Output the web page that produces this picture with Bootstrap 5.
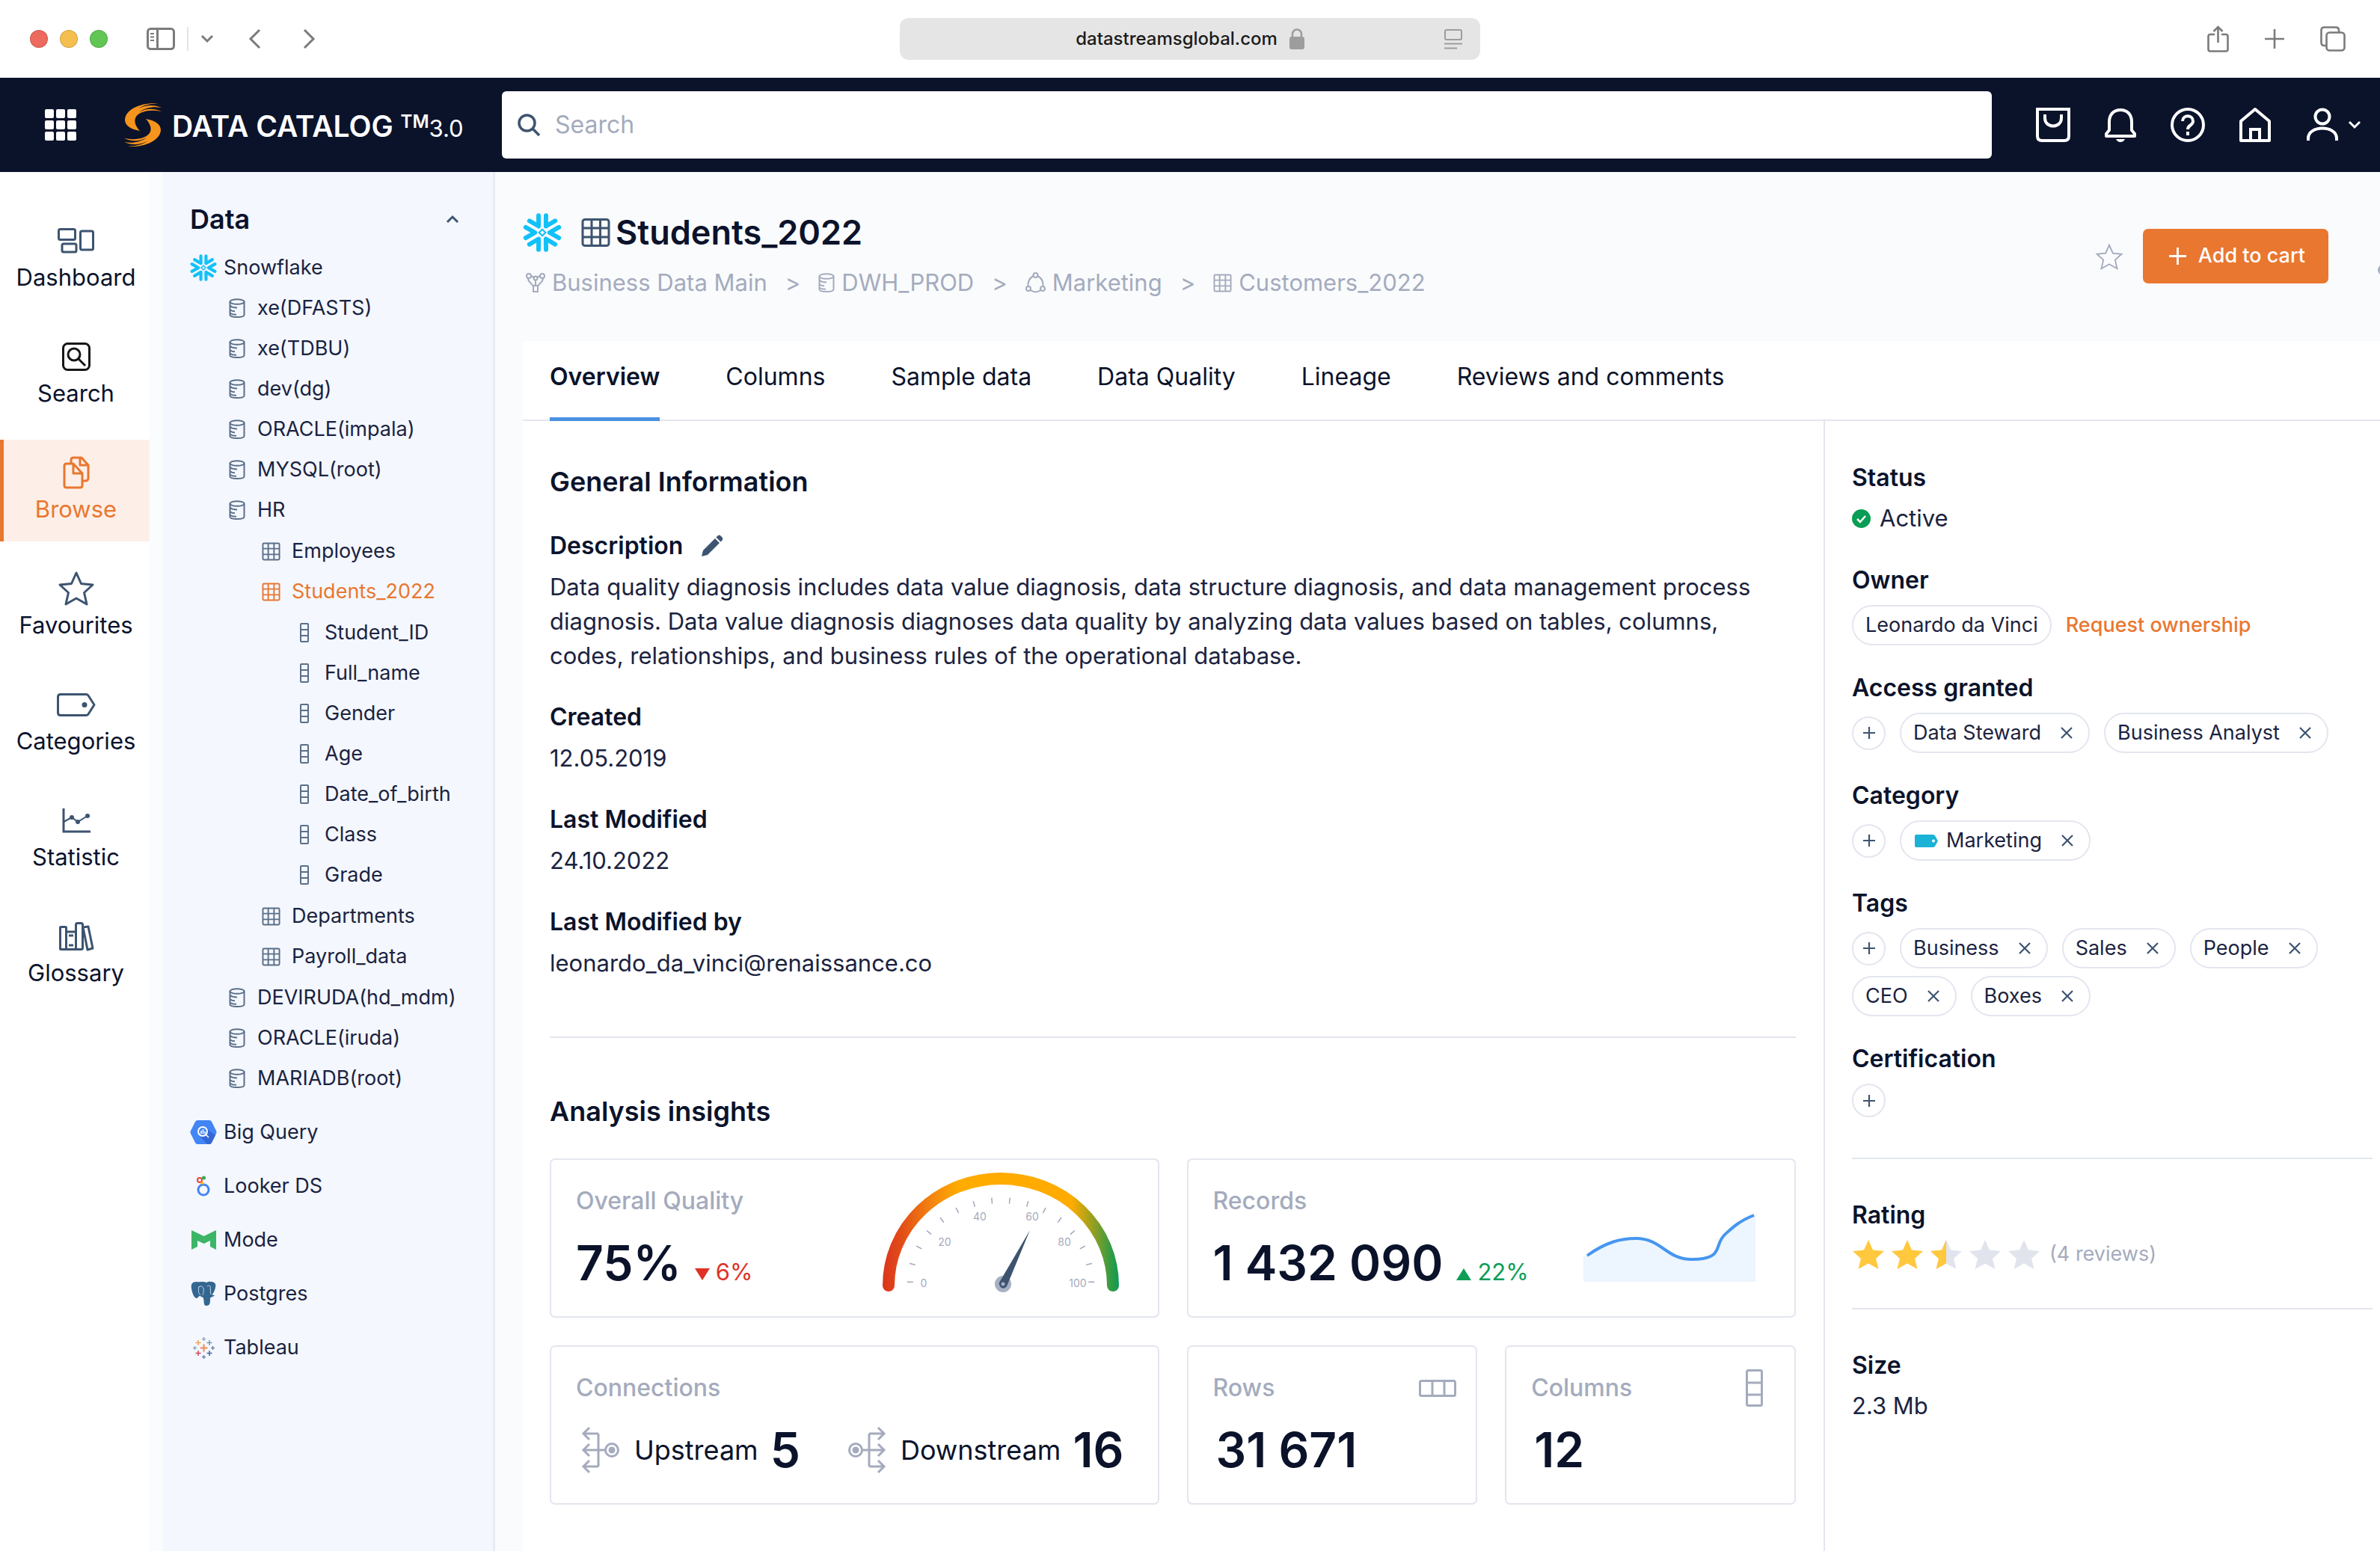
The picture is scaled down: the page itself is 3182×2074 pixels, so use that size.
<!DOCTYPE html>
<html lang="en">
<head>
<meta charset="utf-8">
<meta name="viewport" content="width=device-width, initial-scale=1">
<title>Data Catalog</title>
<link href="https://cdn.jsdelivr.net/npm/bootstrap@5.3.0/dist/css/bootstrap.min.css" rel="stylesheet">
<style>
:root{--ink:#0b132b;--text:#1b2340;--muted:#a4abbd;--line:#e3e6ef;--slate:#3d5470;--orange:#e97730;--blue:#4a90e2}
body{font-family:Inter,"Liberation Sans",sans-serif;color:var(--text);font-size:31px;line-height:46px;background:#fff}
svg{display:block;flex:none;overflow:visible}
a{color:inherit;text-decoration:none}
h1,h2,h3,p,ul,dl,dd{margin:0;padding:0}
ul{list-style:none}
.plain{background:none;border:0;padding:0;color:inherit;line-height:1}
/* browser bar */
.chrome{height:104px;color:#7b7b7b}
.side-a,.side-b{flex:1 1 50px}
.side-a{padding-left:40px}
.side-b{padding-right:46px}
.lamp{width:24px;height:24px;border-radius:50%;border:1px solid rgba(0,0,0,.15)}
.addr{width:776px;height:56px;border-radius:12px;background:#e5e5e5;color:#1b1b1b;font-size:24px;font-weight:500;padding:0 24px}
.addr-sep{width:2px;height:32px;background:#e4e4e4}
/* top bar */
.topbar{height:126px;background:var(--ink);color:#fff;padding-right:24px}
.brand-zone{width:671px;padding-left:60px}
.brand-text{margin-left:14px}
.brand-name{font-size:39px;font-weight:600}
.brand-tm{font-size:24px;font-weight:600;vertical-align:12px}
.brand-ver{font-size:31px;font-weight:400}
.find{height:90px;border-radius:6px;background:#fff;padding:0 21px}
.find input{border:0;outline:0;font-size:32px;color:var(--text);background:none}
.find input::placeholder{color:var(--muted);opacity:1}
.tools{gap:44px;margin-left:59px}
/* rail */
.rail{width:200px;padding-top:48px}
.rail a{height:136px;font-size:31px;border-left:5px solid transparent;padding:21px 2px 0 0;color:var(--ink)}
.rail ul{display:grid;row-gap:19px}
.rail .ico{height:46px;color:var(--slate)}
.rail a.on{background:#fdefe7;border-color:var(--orange);color:var(--orange)}
.rail a.on .ico{color:inherit}
.rail span{line-height:52px}
.gutter{width:18px;background:#fbfcfd}
/* tree */
.tree{width:444px;background:#f4f7fe;border-right:3px solid #e8ebf2;padding:40px 0 0 36px;font-size:27px}
.tree-title{font-size:36px;font-weight:600;color:var(--ink);padding-right:45px;margin-bottom:15px}
.tree li>a{display:flex;align-items:center;height:54px}
.tree .src>a{gap:9px}
.tree .lv1>a{padding-left:52px;gap:16px}
.tree .lv2>a{padding-left:96px;gap:15px}
.tree .lv3>a{padding-left:147px;gap:21px}
.tree ul ul ul{padding:1px 0}
.tree li svg{color:#5b6f88}
.tree a.on,.tree a.on svg{color:var(--orange)}
.tree .tall>a{height:72px}
.tall-list{padding-top:9px}
.pic{width:36px;display:flex;justify-content:center}
/* page */
.page{background:#fafbfd;min-width:0}
.head{padding:51px 0 55px 37px}
.title{font-size:45px;line-height:60px;font-weight:600;color:var(--ink)}
.crumbs{font-size:31px;color:var(--muted);margin-top:14px;gap:24px}
.crumbs a{display:flex;align-items:center;gap:9px}
.cart{height:73px;border-radius:7px;background:var(--orange);border:0;color:#fff;font-size:27px;font-weight:500;padding:0 31px 0 35px;gap:16px}
.acts{padding-top:25px;gap:27px}
.more{margin-left:38px}
.panel{margin-left:37px;background:#fff}
.tabs{border-bottom:2px solid var(--line);padding:25px 36px 0;gap:88px;font-size:32px;height:107px;color:var(--ink)}
.tabs a{line-height:46px;height:82px;border-bottom:5px solid transparent}
.tabs a.on{font-weight:600;border-color:var(--blue)}
.body-col{padding:58px 37px 60px 36px;min-width:0}
.meta-col{width:744px;border-left:2px solid var(--line);padding:53px 10px 60px 36px}
.h-sec{font-size:36px;line-height:46px;font-weight:600;color:var(--ink)}
.h-lab{font-size:32px;line-height:46px;font-weight:600;color:var(--ink);display:block}
.fact{margin-bottom:36px}
.fact .val{margin-top:9px}
.rule{height:2px;background:var(--line)}
/* insight cards */
.cards{display:grid;grid-template-columns:repeat(4,1fr);gap:37px}
.wide{grid-column:span 2}
.tile{border:2px solid var(--line);border-radius:7px;height:213px;padding:32px 0 0 33px}
.tile-slim{padding-right:26px}
.tile-head{height:46px}
.tile-lab{font-size:32px;font-weight:500;color:var(--muted)}
.big{font-size:64px;line-height:72px;font-weight:600;color:var(--ink)}
.tile-val{margin-top:24px}
.down{color:#de3226}.up{color:#0d9d57}
.delta{font-size:31px;margin-left:18px}
.delta svg{display:inline-block;vertical-align:baseline;margin-right:8px}
.flow{font-size:36px;color:var(--ink)}
.flow svg{margin-right:20px}
/* meta column */
.chips{gap:10px 19px;min-height:54px;margin:10px 0 34px}
.chip{height:54px;border:2px solid var(--line);border-radius:27px;padding:0 20px 0 16px;font-size:27px;color:var(--text)}
.chip button{margin-left:25px;color:var(--slate)}
.chip-solo{padding-right:16px}
.plus{width:45px;height:45px;border:2px solid var(--line);border-radius:50%;color:var(--slate)}
.ask{font-size:27px;font-weight:500;color:var(--orange)}
.note{font-size:27px;color:var(--muted)}
</style>
<script src="https://cdn.jsdelivr.net/npm/bootstrap@5.3.0/dist/js/bootstrap.bundle.min.js"></script>
</head>
<body class="d-flex flex-column min-vh-100">
<svg width="0" height="0" class="position-absolute" aria-hidden="true">
<defs>
<symbol id="db" viewBox="0 0 22 26"><g fill="none" stroke="currentColor" stroke-width="2"><ellipse cx="11" cy="4.5" rx="9.5" ry="3.3"/><path d="M1.5 4.5V22c0 4 19 4 19 0V4.500M2 10c2 2 5 2.500 9 2.500M2 15.500c2 1.500 4 1.800 6 1.800M2 20c3 2 5 1.800 8 1.800"/></g></symbol>
<symbol id="tb" viewBox="0 0 26 26"><path fill="none" stroke="currentColor" stroke-width="2" d="M3 1.500h20q1.500 0 1.500 1.500v20q0 1.500-1.500 1.500H3Q1.500 24.500 1.500 23V3Q1.500 1.500 3 1.500zM9 1.500v23M17 1.500v23M1.500 9h23M1.500 17h23"/></symbol>
<symbol id="cl" viewBox="0 0 12 26"><path fill="none" stroke="currentColor" stroke-width="2" d="M2 1h8q1 0 1 1v22q0 1-1 1H2q-1 0-1-1V2q0-1 1-1zM1 9h10M1 17h10"/></symbol>
<symbol id="flake" viewBox="-24 -24 48 48"><g fill="none" stroke="#12c1f8" stroke-width="5.500" stroke-linecap="round" stroke-linejoin="round"><path id="arm" d="M20.500-6.500 9 0l11.500 6.500"/><use href="#arm" transform="rotate(60)"/><use href="#arm" transform="rotate(120)"/><use href="#arm" transform="rotate(180)"/><use href="#arm" transform="rotate(240)"/><use href="#arm" transform="rotate(300)"/></g><path d="M0-4 4 0 0 4-4 0z" fill="none" stroke="#12c1f8" stroke-width="2"/></symbol>
<symbol id="x" viewBox="0 0 18 18"><path d="M2 2l14 14M16 2 2 16" stroke="currentColor" stroke-width="2.200" fill="none"/></symbol>
<symbol id="pl" viewBox="0 0 18 18"><path d="M9 1v16M1 9h16" stroke="currentColor" stroke-width="2.200" fill="none"/></symbol>
<symbol id="star" viewBox="0 0 44 40"><path d="M22 1l6 13.500 15 1.500-11 10 3.500 14L22 32.500 8.500 40 12 26 1 16l15-1.500z"/></symbol>
</defs>
</svg>

<header class="chrome d-flex align-items-center">
  <div class="side-a d-flex align-items-center">
    <div class="d-flex gap-3"><span class="lamp" style="background:#ec6a5e"></span><span class="lamp" style="background:#f5bf4f"></span><span class="lamp" style="background:#61c654"></span></div>
    <button class="plain ms-5" aria-label="Sidebar"><svg class="ms-1" width="38" height="30" viewBox="0 0 38 30" fill="none" stroke="currentColor" stroke-width="3"><rect x="1.500" y="1.500" width="35" height="27" rx="4"/><path d="M14.500 1v28"/><path d="M5 8h5M5 12.500h5M5 17h5" stroke-width="2"/></svg></button>
    <span class="addr-sep ms-3"></span>
    <button class="plain ms-3" aria-label="Tab groups"><svg width="18" height="12" viewBox="0 0 18 12" fill="none" stroke="currentColor" stroke-width="3"><path d="M2 2l7 7 7-7"/></svg></button>
    <button class="plain ms-5" aria-label="Back"><svg width="17" height="28" viewBox="2 0 17 28" fill="none" stroke="currentColor" stroke-width="3"><path d="M15 2 3 14l12 12"/></svg></button>
    <button class="plain ms-5" aria-label="Forward"><svg class="ms-2" width="17" height="28" viewBox="2 0 17 28" fill="none" stroke="currentColor" stroke-width="3"><path d="M2 2l12 12L2 26"/></svg></button>
  </div>
  <div class="addr d-flex align-items-center">
    <span class="flex-fill"></span>
    <span class="ms-4">datastreamsglobal.com</span>
    <svg class="ms-3" width="20" height="28" viewBox="0 0 20 28"><rect y="11" width="20" height="17" rx="3" fill="#9d9d9d"/><path d="M4 12V7.500a6 6 0 0 1 12 0V12" fill="none" stroke="#9d9d9d" stroke-width="2.500"/></svg>
    <span class="flex-fill"></span>
    <svg width="24" height="27" viewBox="0 0 24 27" fill="none" stroke="#9d9d9d" stroke-width="2"><rect x="1" y="1" width="22" height="13" rx="2"/><path d="M0 19.500h24M0 25.500h17"/></svg>
  </div>
  <div class="side-b d-flex align-items-center justify-content-end gap-5">
    <button class="plain" aria-label="Share"><svg width="29" height="36" viewBox="0 0 29 36" fill="none" stroke="currentColor" stroke-width="2.600"><path d="M10 12H4q-2.500 0-2.500 2.500V32q0 2.500 2.500 2.500h21q2.500 0 2.500-2.500V14.500Q27.500 12 25 12h-6M14.500 23V2M8.500 8l6-6 6 6"/></svg></button>
    <button class="plain" aria-label="New tab"><svg width="26" height="26" viewBox="0 0 26 26" stroke="currentColor" stroke-width="2.600"><path d="M13 0v26M0 13h26"/></svg></button>
    <button class="plain" aria-label="Tabs"><svg width="34" height="34" viewBox="0 0 34 34" fill="none" stroke="currentColor" stroke-width="2.600"><rect x="8.500" y="8.500" width="24" height="24" rx="4"/><path d="M8 26H5.500Q1.500 26 1.500 22V5.500q0-4 4-4H21q4 0 4 4V8"/></svg></button>
  </div>
</header>

<nav class="topbar d-flex align-items-center">
  <div class="brand-zone d-flex align-items-center flex-shrink-0">
    <button class="plain" aria-label="Apps"><svg width="42" height="42" viewBox="0 0 42 42" fill="#fff"><g id="dots"><rect width="12" height="12" rx="2"/><rect x="15" width="12" height="12" rx="2"/><rect x="30" width="12" height="12" rx="2"/></g><use href="#dots" y="15"/><use href="#dots" y="30"/></svg></button>
    <a href="#" class="d-flex align-items-center ms-5 ps-3"><svg width="50" height="58" viewBox="0 0 50 58"><g id="swoosh"><path fill="#f7941d" d="M45 0C22-1 2 8 1 22c0 8 8 13 20 15-5-5-9-13-5-19C21 11 34 8 50 11 38 6 29 7 20 12c8-6 18-8 30-6C40 2 30 2 19 7 27 2 35 1 45 0z"/></g><use href="#swoosh" transform="rotate(180 25 29)"/></svg>
    <span class="brand-text"><span class="brand-name">DATA CATALOG </span><span class="brand-tm">TM</span><span class="brand-ver">3.0</span></span></a>
  </div>
  <form class="find d-flex align-items-center flex-fill" role="search">
    <label for="q"><svg width="30" height="30" viewBox="0 0 30 30" fill="none" stroke="#3d5470" stroke-width="3.500"><circle cx="12.500" cy="12.500" r="10.500"/><path d="M20 20l9 9"/></svg></label>
    <input id="q" class="flex-fill ms-3 ps-1" type="search" placeholder="Search">
  </form>
  <div class="tools d-flex align-items-center">
    <button class="plain" aria-label="Cart"><svg width="46" height="46" viewBox="0 0 46 46" fill="none" stroke="#fff" stroke-width="4"><path d="M2 2h42v36q0 6-6 6H8q-6 0-6-6z"/><path d="M12 9v5c0 14 22 14 22 0V9"/></svg></button>
    <button class="plain" aria-label="Notifications"><svg width="46" height="46" viewBox="0 0 46 46" fill="none" stroke="#fff" stroke-width="4"><path d="M4 38h38v-3l-4-5V19C38 9 32 3 23 3S8 9 8 19v11l-4 5z" stroke-linejoin="round"/><path d="M17 42h12q-2 4-6 4t-6-4z" fill="#fff" stroke="none"/></svg></button>
    <button class="plain" aria-label="Help"><svg width="46" height="46" viewBox="0 0 46 46" fill="none" stroke="#fff" stroke-width="4"><circle cx="23" cy="23" r="21"/><path d="M16 18c0-9 14-9 14 0 0 6-7 5-7 11M23 32v5"/></svg></button>
    <button class="plain" aria-label="Home"><svg width="46" height="46" viewBox="0 0 46 46" fill="none" stroke="#fff" stroke-width="4"><path d="M4 18 23 2l19 16v26H4z" stroke-linejoin="round"/><path d="M17 44V29h12v15"/></svg></button>
    <button class="plain d-flex align-items-center" aria-label="Account"><svg width="46" height="46" viewBox="0 0 46 46" fill="none" stroke="#fff" stroke-width="4"><circle cx="23" cy="12" r="9.500"/><path d="M4 44v-3c0-18 38-18 38 0v3"/></svg><svg class="ms-2" width="22" height="12" viewBox="0 0 22 12" fill="none" stroke="#fff" stroke-width="3"><path d="M5 2l7 7 7-7"/></svg></button>
  </div>
</nav>

<div class="d-flex flex-fill">
  <nav class="rail flex-shrink-0">
    <ul class="text-center">
      <li><a href="#" class="d-flex flex-column align-items-center"><span class="ico d-flex align-items-center"><svg width="49" height="34" viewBox="0 0 49 34" fill="none" stroke="currentColor" stroke-width="3"><rect x="1.500" y="1.500" width="22" height="14" rx="2"/><rect x="6" y="21" width="19" height="11" rx="2"/><rect x="30.500" y="4" width="17" height="25" rx="2"/></svg></span><span>Dashboard</span></a></li>
      <li><a href="#" class="d-flex flex-column align-items-center"><span class="ico d-flex align-items-center"><svg width="38" height="38" viewBox="0 0 38 38" fill="none" stroke="#171717" stroke-width="3"><rect x="1.500" y="1.500" width="35" height="35" rx="6"/><circle cx="16" cy="16" r="8"/><path d="M22 22l9 9"/></svg></span><span>Search</span></a></li>
      <li><a href="#" class="on d-flex flex-column align-items-center"><span class="ico d-flex align-items-center"><svg width="36" height="44" viewBox="0 0 36 44" fill="none" stroke="currentColor" stroke-width="3" stroke-linejoin="round"><path d="M11 9V5q0-3 3-3h11l9 10v17q0 4-4 4h-4M23 2v10h11"/><path d="M5 10h9l12 13v16q0 3-3 3H5q-3 0-3-3V13q0-3 3-3zM14 10v13h12"/></svg></span><span>Browse</span></a></li>
      <li><a href="#" class="d-flex flex-column align-items-center"><span class="ico d-flex align-items-center"><svg width="48" height="46" viewBox="0 0 48 46" fill="none" stroke="currentColor" stroke-width="3" stroke-linejoin="round"><path d="M24 2l6.500 14.500L46 18 34.500 28.500 38 44l-14-8-14 8 3.500-15.500L2 18l15.500-1.500z"/></svg></span><span>Favourites</span></a></li>
      <li><a href="#" class="d-flex flex-column align-items-center"><span class="ico d-flex align-items-center"><svg width="52" height="31" viewBox="0 0 52 31" fill="none" stroke="currentColor" stroke-width="3" stroke-linejoin="round"><path d="M5 1.500h34q2 0 3 1.500l8 12.500L42 28q-1 1.500-3 1.500H5q-3.500 0-3.500-3.500V5Q1.500 1.500 5 1.500z"/><circle cx="37" cy="15.500" r="2.500" fill="currentColor" stroke-width="2"/></svg></span><span>Categories</span></a></li>
      <li><a href="#" class="d-flex flex-column align-items-center"><span class="ico d-flex align-items-center"><svg width="38" height="33" viewBox="0 0 38 33" fill="none" stroke="currentColor" stroke-width="3"><path d="M2 0v31h36"/><path d="M2 18l11-6 8 6 13-8" stroke-width="2"/><g fill="currentColor" stroke="none"><circle cx="13" cy="12" r="3"/><circle cx="21" cy="18" r="3"/><circle cx="34" cy="10" r="3"/></g></svg></span><span>Statistic</span></a></li>
      <li><a href="#" class="d-flex flex-column align-items-center"><span class="ico d-flex align-items-center"><svg width="46" height="38" viewBox="0 0 46 38" fill="none" stroke="currentColor" stroke-width="3" stroke-linejoin="round"><rect x="1.500" y="6.500" width="8" height="30" rx="1"/><rect x="9.500" y="13" width="13" height="23.500"/><rect x="22.500" y="1.500" width="9" height="35" rx="2"/><path d="M32 7l7-1 6 29-7 2zM13 18h6M13 31h6"/></svg></span><span>Glossary</span></a></li>
    </ul>
  </nav>
  <div class="gutter flex-shrink-0"></div>

  <aside class="tree flex-shrink-0">
    <div class="tree-title d-flex align-items-center justify-content-between">Data <button class="plain" aria-label="Collapse"><svg width="18" height="12" viewBox="0 0 18 12" fill="none" stroke="#3d5470" stroke-width="3"><path d="M2 10l7-7 7 7"/></svg></button></div>
    <ul>
      <li class="src"><a href="#"><svg width="36" height="36"><use href="#flake"/></svg>Snowflake</a>
        <ul>
          <li class="lv1"><a href="#"><svg width="22" height="26"><use href="#db"/></svg>xe(DFASTS)</a></li>
          <li class="lv1"><a href="#"><svg width="22" height="26"><use href="#db"/></svg>xe(TDBU)</a></li>
          <li class="lv1"><a href="#"><svg width="22" height="26"><use href="#db"/></svg>dev(dg)</a></li>
          <li class="lv1"><a href="#"><svg width="22" height="26"><use href="#db"/></svg>ORACLE(impala)</a></li>
          <li class="lv1"><a href="#"><svg width="22" height="26"><use href="#db"/></svg>MYSQL(root)</a></li>
          <li class="lv1"><a href="#"><svg width="22" height="26"><use href="#db"/></svg>HR</a>
            <ul>
              <li class="lv2"><a href="#"><svg width="25" height="25"><use href="#tb"/></svg>Employees</a></li>
              <li class="lv2"><a href="#" class="on"><svg width="25" height="25"><use href="#tb"/></svg>Students_2022</a>
                <ul>
                  <li class="lv3"><a href="#"><svg width="12" height="26"><use href="#cl"/></svg>Student_ID</a></li>
                  <li class="lv3"><a href="#"><svg width="12" height="26"><use href="#cl"/></svg>Full_name</a></li>
                  <li class="lv3"><a href="#"><svg width="12" height="26"><use href="#cl"/></svg>Gender</a></li>
                  <li class="lv3"><a href="#"><svg width="12" height="26"><use href="#cl"/></svg>Age</a></li>
                  <li class="lv3"><a href="#"><svg width="12" height="26"><use href="#cl"/></svg>Date_of_birth</a></li>
                  <li class="lv3"><a href="#"><svg width="12" height="26"><use href="#cl"/></svg>Class</a></li>
                  <li class="lv3"><a href="#"><svg width="12" height="26"><use href="#cl"/></svg>Grade</a></li>
                </ul></li>
              <li class="lv2"><a href="#"><svg width="25" height="25"><use href="#tb"/></svg>Departments</a></li>
              <li class="lv2"><a href="#"><svg width="25" height="25"><use href="#tb"/></svg>Payroll_data</a></li>
            </ul></li>
          <li class="lv1"><a href="#"><svg width="22" height="26"><use href="#db"/></svg>DEVIRUDA(hd_mdm)</a></li>
          <li class="lv1"><a href="#"><svg width="22" height="26"><use href="#db"/></svg>ORACLE(iruda)</a></li>
          <li class="lv1"><a href="#"><svg width="22" height="26"><use href="#db"/></svg>MARIADB(root)</a></li>
        </ul></li>
    </ul>
    <ul class="tall-list">
      <li class="src tall"><a href="#"><span class="pic"><svg width="36" height="32" viewBox="0 0 36 32"><path fill="#4285f4" d="M10 0h16q2 0 3 2l6 12q1 2 0 4l-6 12q-1 2-3 2H10q-2 0-3-2L1 18q-1-2 0-4L7 2q1-2 3-2z"/><path fill="#3367d6" d="M23 12l11 8-5 10q-1 2-3 2h-3l-9-10z"/><circle cx="17" cy="15" r="6" fill="#4285f4" stroke="#fff" stroke-width="2"/><path d="M21 19l4 4M15 14v4M17.500 12v6M20 15v3" stroke="#fff" stroke-width="1.500"/></svg></span>Big Query</a></li>
      <li class="src tall"><a href="#"><span class="pic"><svg width="18" height="28" viewBox="0 0 18 28" fill="none"><circle cx="9" cy="19" r="7" stroke="#4285f4" stroke-width="3"/><circle cx="4" cy="6" r="3" stroke="#ea4335" stroke-width="2"/><path d="M6 9l3 2" stroke="#fbbc04" stroke-width="3"/><circle cx="9.500" cy="3" r="2.500" fill="#34a853"/></svg></span>Looker DS</a></li>
      <li class="src tall"><a href="#"><span class="pic"><svg width="33" height="26" viewBox="0 0 33 26"><path fill="#3cb567" d="M0 0l16.500 8L33 0v26l-8-4v-8l-8.500 4L8 14v8l-8 4z"/></svg></span>Mode</a></li>
      <li class="src tall"><a href="#"><span class="pic"><svg width="34" height="34" viewBox="0 0 34 34"><path fill="#336791" d="M8 1C2 1 0 4 1 10c1 7 4 13 7 13 2 0 2-3 4-3 2 1 4 1 5 3 1 5 0 10 4 10 5 0 5-4 5-10 1-2 5-2 6-4-2 0-3 0-3-1 3-4 5-11 4-14-2-4-9-4-12-2C17 0 13 2 8 1z"/><path d="M11 7c-1 6-1 9 2 12M22 7c4-2 5 0 4 3 1 3 0 5 1 8M11 8c3-2 5-1 6 2 1 5-1 7-1 9" fill="none" stroke="#c9d7e6" stroke-width="1"/></svg></span>Postgres</a></li>
      <li class="src tall"><a href="#"><span class="pic"><svg width="29" height="29" viewBox="0 0 29 29" fill="none" stroke-width="1.500" opacity=".8"><path stroke="#e8762c" stroke-width="2" d="M14.500 9.500v10M9.500 14.500h10"/><path stroke="#eb9129" d="M7 4v7M3.500 7.500h7"/><path stroke="#59879b" d="M22 4v7M18.500 7.500h7"/><path stroke="#c72035" d="M7 18v7M3.500 21.500h7"/><path stroke="#1f447e" d="M22 18v7M18.500 21.500h7"/><path stroke="#7199a6" d="M14.500 0v5M12 2.500h5M2.500 12v5M0 14.500h5"/><path stroke="#5b6591" d="M14.500 24v5M12 26.500h5M26.500 12v5M24 14.500h5"/></svg></span>Tableau</a></li>
    </ul>
  </aside>

  <main class="page flex-fill d-flex flex-column">
    <div class="head d-flex justify-content-between">
      <div>
        <h1 class="title d-flex align-items-center"><svg width="52" height="52"><use href="#flake"/></svg><svg class="ms-4 me-2" width="40" height="38" viewBox="-4 0 38 38" fill="none" stroke="#3d5470" stroke-width="3"><rect x="-1" y="1.500" width="35" height="35" rx="3"/><path d="M11 1v36M22.500 1v36M-1 13h35M-1 25h35"/></svg>Students_2022</h1>
        <nav class="crumbs d-flex align-items-center" aria-label="Breadcrumb">
          <a href="#"><svg class="ms-1" width="26" height="28" viewBox="0 0 26 28" fill="none" stroke="currentColor" stroke-width="2"><circle cx="4" cy="5" r="3"/><circle cx="13" cy="8" r="2.500"/><circle cx="22" cy="5" r="3"/><path d="M3 8c0 6 5 6 7 11M23 8c0 6-5 6-7 11M7 5l4 2M19 5l-4 2M10 18h6v8h-6zM13 11v7"/></svg>Business Data Main</a>
          <span>&gt;</span>
          <a href="#"><svg width="22" height="26"><use href="#db"/></svg>DWH_PROD</a>
          <span>&gt;</span>
          <a href="#"><svg width="27" height="28" viewBox="0 0 27 28" fill="none" stroke="currentColor" stroke-width="2"><circle cx="13.500" cy="4" r="3"/><circle cx="4" cy="22" r="3"/><circle cx="23" cy="22" r="3"/><path d="M10.500 5C5 8 3 13 3.500 19M16.500 5c5.500 3 7.500 8 7 14M7 24c4 3 9 3 13 0"/></svg>Marketing</a>
          <span>&gt;</span>
          <a href="#"><svg width="25" height="25"><use href="#tb"/></svg>Customers_2022</a>
        </nav>
      </div>
      <div class="acts d-flex align-items-start">
        <button class="plain mt-3" aria-label="Add to favourites"><svg class="mt-1" width="36" height="35" viewBox="0 0 48 46" fill="none" stroke="#a4abbd" stroke-width="2.500"><path d="M24 2l6.500 14.500L46 18 34.500 28.500 38 44l-14-8-14 8 3.500-15.500L2 18l15.500-1.500z"/></svg></button>
        <button class="cart btn d-flex align-items-center"><svg width="23" height="23" viewBox="0 0 23 23" stroke="#fff" stroke-width="2.800"><path d="M11.500 0v23M0 11.500h23"/></svg>Add to cart</button>
        <svg class="more mt-5" width="4" height="14" viewBox="0 0 4 14"><path d="M4 1q-6 6 0 12z" fill="#a4abbd"/></svg>
      </div>
    </div>

    <div class="panel flex-fill d-flex flex-column">
      <nav class="tabs d-flex">
        <a href="#" class="on">Overview</a><a href="#">Columns</a><a href="#">Sample data</a><a href="#">Data Quality</a><a href="#">Lineage</a><a href="#">Reviews and comments</a>
      </nav>
      <div class="d-flex flex-fill">
        <div class="body-col flex-fill">
          <h2 class="h-sec mb-4 pb-3">General Information</h2>
          <div class="fact"><div class="d-flex align-items-center"><span class="h-lab">Description</span><button class="plain ms-4" aria-label="Edit description"><svg width="30" height="30" viewBox="0 0 30 30" fill="#3d5470"><path d="M1 29l2-8L19 5l6 6L9 27zM20.500 3.500 23 1q2-1 3.500.500l2 2Q30 5 29 7l-2.500 2.500z"/></svg></button></div>
            <p class="val">Data quality diagnosis includes data value diagnosis, data structure diagnosis, and data management process<br>diagnosis. Data value diagnosis diagnoses data quality by analyzing data values based on tables, columns,<br>codes, relationships, and business rules of the operational database.</p></div>
          <div class="fact"><span class="h-lab">Created</span><p class="val">12.05.2019</p></div>
          <div class="fact"><span class="h-lab">Last Modified</span><p class="val">24.10.2022</p></div>
          <div class="fact"><span class="h-lab">Last Modified by</span><p class="val">leonardo_da_vinci@renaissance.co</p></div>
          <div class="rule" style="margin:75px 0"></div>
          <h2 class="h-sec mb-4 pb-3">Analysis insights</h2>
          <div class="cards">
            <section class="tile wide d-flex justify-content-between">
              <div><div class="tile-lab">Overall Quality</div>
                <div class="tile-val d-flex align-items-baseline"><span class="big">75%</span><span class="delta down"><svg width="20" height="16" viewBox="0 0 20 16"><path fill="currentColor" d="M0 0h20L10 16z"/></svg>6%</span></div></div>
              <svg class="gauge" width="368" height="160" viewBox="0 0 368 160">
                <defs><linearGradient id="gg" gradientUnits="userSpaceOnUse" x1="0" y1="0" x2="316" y2="0"><stop offset="0" stop-color="#db341c"/><stop offset=".08" stop-color="#e24d18"/><stop offset=".22" stop-color="#f58a0e"/><stop offset=".32" stop-color="#ffab00"/><stop offset=".8" stop-color="#ffab00"/><stop offset=".9" stop-color="#8a9e26"/><stop offset=".97" stop-color="#2d9b45"/><stop offset="1" stop-color="#0f9a58"/></linearGradient></defs>
                <g transform="translate(0 -15)">
                <path d="M8 151A150 143 0 0 1 308 151" fill="none" stroke="url(#gg)" stroke-width="16" stroke-linecap="round"/>
                <path d="M37 147A121 110 0 0 1 279 147" fill="none" stroke="#9ba3b5" stroke-width="8" pathLength="180.700" stroke-dasharray=".7 11.300"/>
                <g font-size="14" fill="#a4abbd" text-anchor="middle"><text x="55" y="153">0</text><text x="83" y="98">20</text><text x="130" y="64">40</text><text x="200" y="64">60</text><text x="243" y="98">80</text><text x="261" y="153">100</text></g>
                <circle cx="161" cy="149" r="11" fill="#a7b0c2"/><path d="M156 147 197 77l-31 75q-3 4-7 2-4-3-3-7z" fill="#3d5470"/><circle cx="161" cy="149" r="2.500" fill="#a7b0c2"/></g>
              </svg>
            </section>
            <section class="tile wide d-flex justify-content-between">
              <div><div class="tile-lab">Records</div>
                <div class="tile-val d-flex align-items-baseline"><span class="big">1 432 090</span><span class="delta up"><svg width="20" height="16" viewBox="0 0 20 16"><path fill="currentColor" d="M0 16h20L10 0z"/></svg>22%</span></div></div>
              <svg class="mt-4 pt-3" width="282" height="131" viewBox="0 0 282 91" preserveAspectRatio="xMinYMin"><path fill="#edf5fe" d="M0 58C25 40 45 34 70 34c35 0 40 28 75 28 45 0 28-22 45-36 10-9 20-17 40-25v90H0z"/><path fill="none" stroke="#4696f0" stroke-width="4" d="M5 56C30 38 50 33 70 33c35 0 40 28 75 28 45 0 28-20 45-34 10-9 18-17 38-25"/></svg>
            </section>
            <section class="tile wide">
              <div class="tile-lab">Connections</div>
              <div class="tile-val d-flex align-items-center flow">
                <svg class="ms-2" width="50" height="62" viewBox="0 0 50 62" fill="none" stroke="#a4abbd" stroke-width="3"><circle cx="40" cy="31" r="8.500"/><circle cx="40" cy="31" r="4.500" fill="#a4abbd" stroke="none"/><path d="M31 31H2M22 9v44M22 9H2M22 53H2M10 1 2 9l8 8M10 23l-8 8 8 8M10 45l-8 8 8 8"/></svg>
                <span>Upstream</span><span class="big ms-3">5</span>
                <svg class="ms-5" width="66" height="62" viewBox="-16 0 66 62" fill="none" stroke="#a4abbd" stroke-width="3"><circle cx="10" cy="31" r="8.500"/><circle cx="10" cy="31" r="4.500" fill="#a4abbd" stroke="none"/><path d="M19 31h29M28 9v44M28 9h20M28 53h20M40 1l8 8-8 8M40 23l8 8-8 8M40 45l8 8-8 8"/></svg>
                <span>Downstream</span><span class="big ms-3">16</span>
              </div>
            </section>
            <section class="tile tile-slim"><div class="tile-head d-flex align-items-center justify-content-between"><span class="tile-lab">Rows</span><svg width="50" height="23" viewBox="0 0 50 23" fill="none" stroke="#a4abbd" stroke-width="3"><rect x="1.500" y="1.500" width="47" height="20" rx="2"/><path d="M18 1v21M34 1v21"/></svg></div>
              <div class="tile-val big ps-1">31 671</div></section>
            <section class="tile tile-slim"><div class="tile-head d-flex align-items-center justify-content-between"><span class="tile-lab">Columns</span><svg class="me-3" width="23" height="50" viewBox="0 0 23 50" fill="none" stroke="#a4abbd" stroke-width="3"><rect x="1.500" y="1.500" width="20" height="47" rx="2"/><path d="M1 18h21M1 34h21"/></svg></div>
              <div class="tile-val big ps-1">12</div></section>
          </div>
        </div>

        <aside class="meta-col flex-shrink-0">
          <h3 class="h-lab">Status</h3>
          <div class="d-flex align-items-center mt-2" style="margin-bottom:37px"><svg class="me-2" width="25" height="25" viewBox="0 0 25 25"><circle cx="12.500" cy="12.500" r="12.500" fill="#0a9d55"/><path d="M7 13l4 4 7-8" fill="none" stroke="#fff" stroke-width="2.500"/></svg><span class="ps-1">Active</span></div>
          <h3 class="h-lab">Owner</h3>
          <div class="chips d-flex flex-wrap align-items-center"><span class="chip chip-solo d-flex align-items-center">Leonardo da Vinci</span><a href="#" class="ask">Request ownership</a></div>
          <h3 class="h-lab">Access granted</h3>
          <div class="chips d-flex flex-wrap align-items-center">
            <button class="plain plus d-flex align-items-center justify-content-center" aria-label="Add access"><svg width="18" height="18"><use href="#pl"/></svg></button>
            <span class="chip d-flex align-items-center">Data Steward<button class="plain" aria-label="Remove Data Steward"><svg width="18" height="18"><use href="#x"/></svg></button></span>
            <span class="chip d-flex align-items-center">Business Analyst<button class="plain" aria-label="Remove Business Analyst"><svg width="18" height="18"><use href="#x"/></svg></button></span></div>
          <h3 class="h-lab">Category</h3>
          <div class="chips d-flex flex-wrap align-items-center">
            <button class="plain plus d-flex align-items-center justify-content-center" aria-label="Add category"><svg width="18" height="18"><use href="#pl"/></svg></button>
            <span class="chip d-flex align-items-center"><svg class="me-2" width="36" height="17" viewBox="-2 0 36 17"><path fill="#1ab2d6" d="M2 0h22q2 0 3 1.500l4 7-4 7Q26 17 24 17H2q-2 0-2-2V2q0-2 2-2z"/><circle cx="25" cy="8.500" r="2" fill="#fff"/></svg>Marketing<button class="plain" aria-label="Remove Marketing"><svg width="18" height="18"><use href="#x"/></svg></button></span></div>
          <h3 class="h-lab">Tags</h3>
          <div class="chips d-flex flex-wrap align-items-center">
            <button class="plain plus d-flex align-items-center justify-content-center" aria-label="Add tag"><svg width="18" height="18"><use href="#pl"/></svg></button>
            <span class="chip d-flex align-items-center">Business<button class="plain" aria-label="Remove Business"><svg width="18" height="18"><use href="#x"/></svg></button></span>
            <span class="chip d-flex align-items-center">Sales<button class="plain" aria-label="Remove Sales"><svg width="18" height="18"><use href="#x"/></svg></button></span>
            <span class="chip d-flex align-items-center">People<button class="plain" aria-label="Remove People"><svg width="18" height="18"><use href="#x"/></svg></button></span>
            <span class="chip d-flex align-items-center">CEO<button class="plain" aria-label="Remove CEO"><svg width="18" height="18"><use href="#x"/></svg></button></span>
            <span class="chip d-flex align-items-center">Boxes<button class="plain" aria-label="Remove Boxes"><svg width="18" height="18"><use href="#x"/></svg></button></span></div>
          <h3 class="h-lab">Certification</h3>
          <button class="plain plus d-flex align-items-center justify-content-center" style="margin:10px 0 54px" aria-label="Add certification"><svg width="18" height="18"><use href="#pl"/></svg></button>
          <div class="rule"></div>
          <h3 class="h-lab" style="margin-top:52px">Rating</h3>
          <div class="d-flex align-items-center gap-2" style="margin:6px 0 49px">
            <svg width="44" height="40" fill="#ffc83d"><use href="#star"/></svg><svg width="44" height="40" fill="#ffc83d"><use href="#star"/></svg>
            <svg width="44" height="40" viewBox="0 0 44 40"><path fill="#e1e4ed" d="M22 1l6 13.500 15 1.500-11 10 3.500 14L22 32.500 8.500 40 12 26 1 16l15-1.500z"/><path fill="#ffc83d" d="M22 1v31.500L8.500 40 12 26 1 16l15-1.500z"/></svg>
            <svg width="44" height="40" fill="#e1e4ed"><use href="#star"/></svg><svg width="44" height="40" fill="#e1e4ed"><use href="#star"/></svg>
            <span class="note ps-1">(4 reviews)</span></div>
          <div class="rule"></div>
          <h3 class="h-lab" style="margin-top:52px">Size</h3>
          <p class="mt-2">2.3 Mb</p>
        </aside>
      </div>
    </div>
  </main>
</div>
</body>
</html>
